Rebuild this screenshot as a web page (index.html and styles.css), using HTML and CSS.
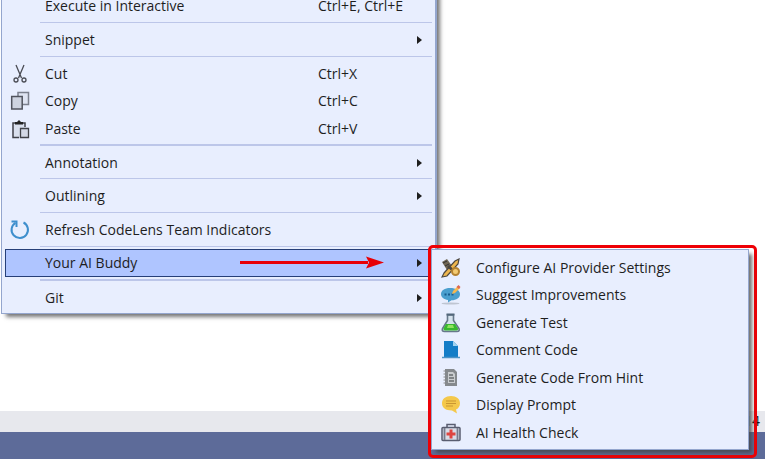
FILE: index.html
```html
<!DOCTYPE html>
<html lang="en">
<head>
<meta charset="utf-8">
<title>Editor context menu</title>
<link rel="stylesheet" href="styles.css">
</head>
<body>
<main class="editor">
  <div class="menu context-menu" role="menu">
    <button class="item" role="menuitem"><span class="label">Execute in Interactive</span><kbd>Ctrl+E, Ctrl+E</kbd></button>
    <hr>
    <button class="item sub" role="menuitem"><span class="label">Snippet</span></button>
    <hr>
    <button class="item" role="menuitem">
      <svg class="icon" viewBox="0 0 20 20" fill="none" stroke="#4a4c54" stroke-width="1.300"><path d="M6 1l5.500 13M14 1L8.500 14"/><circle cx="6" cy="16" r="2"/><circle cx="14" cy="16" r="2"/></svg>
      <span class="label">Cut</span><kbd>Ctrl+X</kbd></button>
    <button class="item tall" role="menuitem">
      <svg class="icon" viewBox="0 0 20 20" stroke-width="1.500"><path d="M8 1.500h10.500v12H8z" fill="#dfe4f2" stroke="#7b808d"/><path d="M1.700 5.500h10.500v12.500H1.700z" fill="#ced3e0" stroke="#50535d"/></svg>
      <span class="label">Copy</span><kbd>Ctrl+C</kbd></button>
    <button class="item" role="menuitem">
      <svg class="icon" viewBox="0 0 20 20"><path d="M2.500 4h13v15h-13z" fill="#d9dfed"/><path d="M9 18.500H3V4h2M13 4h2v4" fill="none" stroke="#404249" stroke-width="1.500"/><path d="M5 5.500V3h2l2-2 2 2h2v2.500z" fill="#222"/><path d="M10.500 9.500h8v9h-8z" fill="#d3d8e6" stroke="#404249" stroke-width="1.300"/></svg>
      <span class="label">Paste</span><kbd>Ctrl+V</kbd></button>
    <hr class="thick">
    <button class="item sub" role="menuitem"><span class="label">Annotation</span></button>
    <hr class="tight-top">
    <button class="item sub" role="menuitem"><span class="label">Outlining</span></button>
    <hr>
    <button class="item" role="menuitem">
      <svg class="icon" viewBox="0 0 20 20" fill="none" stroke="#3f8fcd" stroke-width="2"><path d="M5.500 2.800A8.200 8.200 0 1 0 13.500 2.500"/><path d="M1.500 1.500h5v5.500"/></svg>
      <span class="label">Refresh CodeLens Team Indicators</span></button>
    <hr class="tight-bottom">
    <button class="item sub tall active" role="menuitem" aria-haspopup="menu" aria-expanded="true"><span class="label">Your AI Buddy</span></button>
    <hr class="thick">
    <button class="item sub" role="menuitem"><span class="label">Git</span></button>
  </div>
</main>
<footer>
  <div class="editor-status">14</div>
  <div class="status-bar"></div>
</footer>

<svg class="arrow" viewBox="0 0 144 14" aria-hidden="true"><path d="M0 5h128v3H0z"/><path d="M126 .5l18 6-18 6 3-6z"/></svg>

<div class="callout">
  <div class="menu submenu" role="menu" aria-label="Your AI Buddy">
    <button class="item" role="menuitem">
      <svg class="icon" viewBox="0 0 20 20"><path d="M1 4l5-3 5 7-5 4z" fill="#706653"/><path d="M2 5l4-2M4 8l4-2" stroke="#333"/><path d="M3 15L14 3l4-2-1 5L6 18l-5 1z" fill="#edb64e" stroke="#4c473f" stroke-width="1.200"/><path d="M7 8l9 8" stroke="#4c473f" stroke-width="3"/><circle cx="14.500" cy="13.500" r="3.500" fill="#f3ca72" stroke="#b48231" stroke-width="2"/></svg>
      <span class="label">Configure AI Provider Settings</span></button>
    <button class="item tall" role="menuitem">
      <svg class="icon" viewBox="0 0 20 20"><ellipse cx="9.500" cy="18.500" rx="9" ry="1" fill="#bfc5d2"/><path d="M9 3c6 0 10 2.500 10 6.200 0 3.600-3.500 6-8.500 6L7 17.500v-2.600C3 14.300 0 12.300 0 9.200 0 5.500 3.600 3 9 3z" fill="#4b9fce"/><path d="M3.500 9.500h9" stroke="#185c8e" stroke-width="1.800" stroke-dasharray="2 1.500"/><path d="M11 9l1-3 5-5 2 2-5 5z" fill="#f6b84f"/><path d="M15.500 2L17.500 0l2 2L18 4z" fill="#df6751"/></svg>
      <span class="label">Suggest Improvements</span></button>
    <button class="item" role="menuitem">
      <svg class="icon" viewBox="0 0 20 20"><path d="M6.500 2h6v5.500l5.500 8q1 3-2 3H3.500Q.5 18.500 1.500 15.500l5-8z" fill="#d6e3ed" stroke="#66788a" stroke-width="1.600"/><path d="M5 11h9l3 4.500q.5 2-1.500 2H4q-2 0-1.500-2z" fill="#38b82f"/><path d="M7 12h5l1 3H6z" fill="#8fe35e"/><path d="M5.500 1.500h8" stroke="#53677a" stroke-width="2"/></svg>
      <span class="label">Generate Test</span></button>
    <button class="item tall" role="menuitem">
      <svg class="icon" viewBox="0 0 20 20"><path d="M3 1h9l5 5v12H3z" fill="#147dc7"/><path d="M12 1v5h5z" fill="#a2d3f1"/><path d="M1 17.500h18" stroke="#4d93c5" stroke-width="1.500"/></svg>
      <span class="label">Comment Code</span></button>
    <button class="item" role="menuitem">
      <svg class="icon" viewBox="0 0 20 20"><path d="M4 1h9l3 3v14H4z" fill="#85898d"/><path d="M7 4h5l2 2v9H7z" fill="#c9cccf"/><path d="M8 7h4M8 10h5M8 13h5" stroke="#686c70" stroke-width="1.400"/><path d="M4 3H2.500M4 6H2.500M4 9H2.500M4 12H2.500M4 15H2.500" stroke="#888"/></svg>
      <span class="label">Generate Code From Hint</span></button>
    <button class="item tall" role="menuitem">
      <svg class="icon" viewBox="0 0 20 20"><path d="M10 1c5.500 0 9 3 9 7.300 0 3.200-2 5.500-4 6.200l1 4-5-3C4.500 15.500 1 13 1 8.300 1 4 4.500 1 10 1z" fill="#f4c84b"/><path d="M5 6h10M5 8.500h10M5 11h7" stroke="#c99632" stroke-width="1.100"/></svg>
      <span class="label">Display Prompt</span></button>
    <button class="item" role="menuitem">
      <svg class="icon" viewBox="0 0 20 20"><path d="M6 4.500V1.500h8v3" fill="none" stroke="#595d70" stroke-width="1.500"/><rect x="1" y="4.500" width="18" height="13" rx="1" fill="#d9dce7" stroke="#595d70" stroke-width="1.500"/><path d="M3.500 5v12M16.500 5v12" stroke="#777b8c" stroke-width="1.800"/><path d="M8.500 6.500h3v3h3v3h-3v3h-3v-3h-3v-3h3z" fill="#df4540"/></svg>
      <span class="label">AI Health Check</span></button>
  </div>
</div>
</body>
</html>
```
FILE: styles.css
```css
* { box-sizing: border-box; }

body {
  margin: 0;
  min-height: 100vh;
  display: flex;
  flex-direction: column;
  overflow: hidden;
  background: #fff;
  color: #1e1e1e;
  font: 14px/20px "Open Sans", "Noto Sans", sans-serif;
}

.editor { flex: 1; padding-left: 1px; }

.menu {
  display: flex;
  flex-direction: column;
  background: #e8eefe;
  border: 1px solid #94a6ce;
}

.context-menu {
  width: 57vw;
  margin-top: -10px;
  padding: 0 3px 2px;
  border-width: 2px 2px 1px 1px;
  box-shadow: 4px 4px 4px -1px #777;
}

.item {
  display: flex;
  align-items: center;
  position: relative;
  flex: none;
  height: 27px;
  margin: 0;
  padding: 0 5px 0 40px;
  border: 0;
  background: none;
  color: inherit;
  font: inherit;
  text-align: left;
  white-space: nowrap;
}

.tall { height: 28px; }
.label { flex: 1; }
.item kbd { width: 109px; font: inherit; }

.icon {
  position: absolute;
  left: 5px;
  width: 20px;
  height: 20px;
}

.sub::after {
  content: "";
  border: solid transparent;
  border-width: 4px 0 4px 5px;
  border-left-color: #1e1e1e;
  margin-right: 5px;
}

.active {
  background: #afc5ff;
  outline: 1px solid #263f78;
  outline-offset: -1px;
}

hr {
  flex: none;
  width: auto;
  height: 1px;
  margin: 3px 0 3px 35px;
  border: 0;
  background: #bcc6e9;
}

.thick { height: 2px; margin-top: 2px; }
.tight-top { margin-top: 2px; }
.tight-bottom { margin-bottom: 2px; }

.editor-status {
  height: 21px;
  padding-right: 5px;
  background: #e7e8ed;
  text-align: right;
}

.status-bar { height: 27px; background: #5d6b99; }

.arrow {
  position: absolute;
  left: 240px;
  top: 256px;
  width: 144px;
  height: 14px;
  fill: #e80006;
}

.callout {
  position: absolute;
  left: 428px;
  top: 245px;
  right: 8px;
  padding: 1px 5px 5px 0;
  border: 3px solid #ee0006;
  border-radius: 5px;
}

.submenu {
  padding: 4px 0 3px;
  box-shadow: 4px 4px 4px -1px #444c;
}

.submenu .item { padding-left: 44px; }
.submenu .icon { left: 9px; }
```
